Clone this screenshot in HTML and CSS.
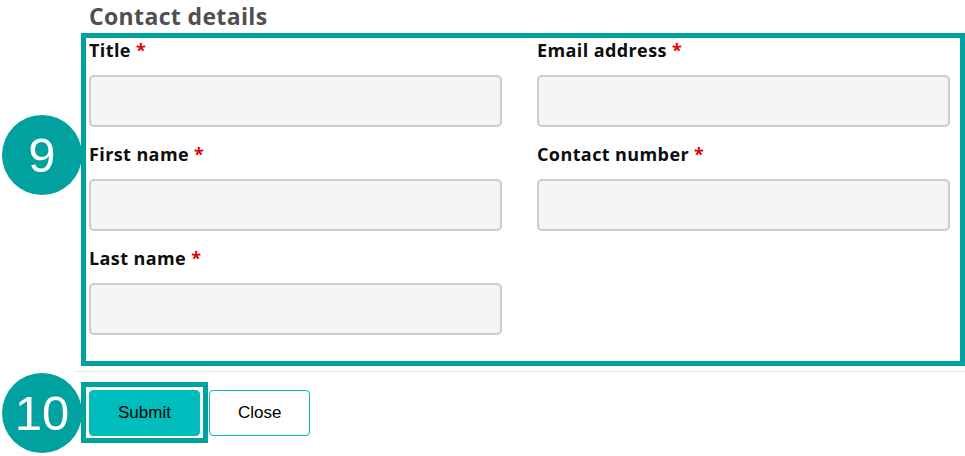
FILE: index.html
```html
<!DOCTYPE html>
<html lang="en">
<head>
<meta charset="utf-8">
<title>Contact details</title>
<link rel="stylesheet" href="styles.css">
</head>
<body>
<div class="page">
  <span class="badge badge-fields">9</span>
  <span class="badge badge-actions">10</span>
  <h2 class="section-title">Contact details</h2>
  <div class="form-frame">
    <div class="field-grid">
      <div class="field">
        <label class="field-label">Title <span class="req">*</span></label>
        <input class="field-input" type="text">
      </div>
      <div class="field">
        <label class="field-label">Email address <span class="req">*</span></label>
        <input class="field-input" type="text">
      </div>
      <div class="field">
        <label class="field-label">First name <span class="req">*</span></label>
        <input class="field-input" type="text">
      </div>
      <div class="field">
        <label class="field-label">Contact number <span class="req">*</span></label>
        <input class="field-input" type="text">
      </div>
      <div class="field">
        <label class="field-label">Last name <span class="req">*</span></label>
        <input class="field-input" type="text">
      </div>
    </div>
  </div>
  <div class="divider"></div>
  <div class="actions">
    <button class="btn btn-primary" type="button">Submit</button>
    <button class="btn btn-secondary" type="button">Close</button>
  </div>
</div>
</body>
</html>
```
FILE: styles.css
```css
html, body {
  margin: 0;
  padding: 0;
  background: #ffffff;
}

body {
  font-family: "Open Sans", "Liberation Sans", sans-serif;
  color: #111111;
}

.page {
  position: relative;
  width: 965px;
  height: 456px;
  overflow: hidden;
  padding-left: 81px;
  box-sizing: border-box;
}

.section-title {
  margin: 3px 0 4px 8px;
  font-size: 23px;
  line-height: 26px;
  font-weight: 700;
  letter-spacing: 0.35px;
  color: #4f4f4f;
}

.form-frame {
  position: relative;
  z-index: 1;
  border: 5px solid #00a19f;
  padding: 2px 10px 26px 3px;
  background: #ffffff;
}

.field-grid {
  display: grid;
  grid-template-columns: 413px 413px;
  column-gap: 35px;
  row-gap: 17px;
}

.field {
  display: flex;
  flex-direction: column;
}

.field-label {
  display: block;
  font-size: 18px;
  line-height: 20px;
  font-weight: 700;
  letter-spacing: 0.4px;
  color: #0d0d0d;
  margin-bottom: 15px;
}

.req {
  color: #e00000;
}

.field-input {
  box-sizing: border-box;
  width: 100%;
  height: 52px;
  margin: 0;
  border: 2px solid #cccccc;
  border-radius: 5px;
  background: #f5f4f7;
}

.divider {
  margin: 5px 0 0 -7px;
  height: 1px;
  background: #e6e6e6;
}

.actions {
  display: flex;
  gap: 9px;
  margin-top: 18px;
  padding-left: 8px;
}

.btn {
  box-sizing: border-box;
  height: 46px;
  padding: 0 28px;
  border: 1px solid #00bdbd;
  border-radius: 4px;
  font-family: "Liberation Sans", Arial, sans-serif;
  font-size: 17px;
  color: #000000;
  cursor: pointer;
}

.btn-primary {
  position: relative;
  background: #00bdbd;
}

.btn-primary::after {
  content: "";
  position: absolute;
  top: -9px;
  left: -9px;
  right: -9px;
  bottom: -8px;
  border: 5px solid #00a19f;
  pointer-events: none;
}

.btn-secondary {
  background: #ffffff;
}

.badge {
  position: absolute;
  left: 2px;
  width: 80px;
  height: 80px;
  border-radius: 50%;
  background: #00a19f;
  color: #ffffff;
  font-family: "Liberation Sans", Arial, sans-serif;
  font-size: 49px;
  line-height: 80px;
  text-align: center;
}

.badge-fields {
  top: 115px;
}

.badge-actions {
  top: 373px;
}
```
